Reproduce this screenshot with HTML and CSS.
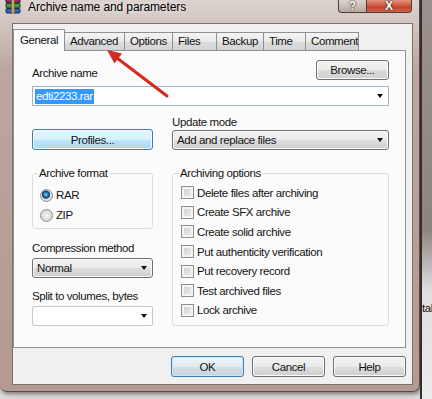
FILE: index.html
```html
<!DOCTYPE html>
<html lang="en">
<head>
  <meta charset="UTF-8">
  <title>Archive name and parameters</title>
  <link rel="stylesheet" href="styles.css">
</head>
<body>
  <div class="desktop">
    <div class="window">
      <div class="titlebar">
        <svg class="app-icon" viewBox="0 0 16 16">
          <rect x="1" y="0.5" width="14" height="4.5" rx="1" fill="#8e2c6a" stroke="#3b1530"/>
          <rect x="1" y="5.5" width="14" height="4.5" rx="1" fill="#3d9a3f" stroke="#173d19"/>
          <rect x="1" y="10.5" width="14" height="4.5" rx="1" fill="#2f63b8" stroke="#142a55"/>
          <rect x="6.5" y="0" width="3" height="16" fill="#c9a263" stroke="#6b5128" stroke-width="0.5"/>
        </svg>
        <span class="title">Archive name and parameters</span>
        <div class="caption">
          <span class="cap-btn cap-help">?</span>
          <span class="cap-btn cap-close">X</span>
        </div>
      </div>

      <div class="client">
        <div class="tabs">
          <span class="tab tab-general active">General</span>
          <span class="tab tab-advanced">Advanced</span>
          <span class="tab tab-options">Options</span>
          <span class="tab tab-files">Files</span>
          <span class="tab tab-backup">Backup</span>
          <span class="tab tab-time">Time</span>
          <span class="tab tab-comment">Comment</span>
        </div>

        <div class="panel">
          <div class="name-row">
            <label>Archive name</label>
            <button class="btn btn-browse">Browse...</button>
          </div>
          <div class="combo combo-edit">
            <span class="selected">edti2233.rar</span>
            <i class="arrow"></i>
          </div>

          <div class="columns">
            <button class="btn btn-hover btn-profiles">Profiles...</button>
            <div class="update">
              <label>Update mode</label>
              <div class="combo combo-list">
                <span>Add and replace files</span>
                <i class="arrow"></i>
              </div>
            </div>

            <div class="left-stack">
              <fieldset class="group group-format">
                <legend>Archive format</legend>
                <div class="option"><span class="radio checked"></span>RAR</div>
                <div class="option"><span class="radio"></span>ZIP</div>
              </fieldset>
              <label class="field-label">Compression method</label>
              <div class="combo combo-list combo-small">
                <span>Normal</span>
                <i class="arrow"></i>
              </div>
              <label class="field-label">Split to volumes, bytes</label>
              <div class="combo combo-empty combo-small">
                <i class="arrow"></i>
              </div>
            </div>

            <fieldset class="group group-options">
              <legend>Archiving options</legend>
              <div class="check-row"><span class="check"></span>Delete files after archiving</div>
              <div class="check-row"><span class="check"></span>Create SFX archive</div>
              <div class="check-row"><span class="check"></span>Create solid archive</div>
              <div class="check-row"><span class="check"></span>Put authenticity verification</div>
              <div class="check-row"><span class="check"></span>Put recovery record</div>
              <div class="check-row"><span class="check"></span>Test archived files</div>
              <div class="check-row"><span class="check"></span>Lock archive</div>
            </fieldset>
          </div>
        </div>

        <div class="dialog-buttons">
          <button class="btn btn-default">OK</button>
          <button class="btn">Cancel</button>
          <button class="btn">Help</button>
        </div>
      </div>
    </div>
    <div class="behind"><span>tal</span></div>
  </div>

  <svg class="pointer" width="432" height="399" viewBox="0 0 432 399">
    <line x1="167" y1="96" x2="117" y2="58" stroke="#d42a1f" stroke-width="3" stroke-linecap="round"/>
    <polygon points="107,50 122,53.5 114.5,63.5" fill="#d42a1f"/>
  </svg>
</body>
</html>
```

FILE: styles.css
```css
body {
  margin: 0;
  width: 432px;
  height: 399px;
  overflow: hidden;
  position: relative;
  background: #dcd9d8;
  font-family: "Liberation Sans", Arial, sans-serif;
  font-size: 11.5px;
  letter-spacing: -0.4px;
  color: #141414;
}
.desktop {
  display: flex;
  align-items: flex-start;
  height: 399px;
}
.window {
  box-sizing: border-box;
  width: 420px;
  height: 392px;
  flex-shrink: 0;
  display: flex;
  flex-direction: column;
  background: linear-gradient(to bottom, #dbd2ce 0, #d2c6c1 22px, #bca69f 70px, #b39a93 100%);
  border-right: 1px solid #5b4944;
  border-bottom: 1px solid #5b4944;
  border-radius: 0 0 7px 7px;
  box-shadow: 1px 2px 4px rgba(0, 0, 0, 0.45);
}

/* title bar */
.titlebar {
  height: 23px;
  flex-shrink: 0;
  display: flex;
  align-items: flex-start;
}
.app-icon {
  width: 16px;
  height: 16px;
  margin: -2px 0 0 5px;
}
.title {
  margin-left: 7px;
  font-size: 12px;
  letter-spacing: -0.1px;
  line-height: 14px;
  color: #000;
  text-shadow: 0 0 6px #fff;
}
.caption {
  margin-left: auto;
  margin-right: 7px;
  display: flex;
}
.cap-btn {
  box-sizing: border-box;
  height: 13px;
  display: flex;
  align-items: flex-end;
  justify-content: center;
  border: 1px solid #4e3d39;
  border-top: none;
  color: #fff;
  font-weight: bold;
  font-size: 12px;
  line-height: 12px;
  letter-spacing: 0;
  text-shadow: 0 0 2px #2a1a16, 0 0 1px #2a1a16;
}
.cap-help {
  width: 29px;
  border-radius: 0 0 0 4px;
  background: linear-gradient(#ddd4d0, #b9a8a2);
}
.cap-close {
  width: 45px;
  border-left: none;
  border-radius: 0 0 4px 0;
  background: linear-gradient(#e29480, #c8452d 60%, #d3624b);
}

/* client area */
.client {
  box-sizing: border-box;
  width: 401px;
  height: 362px;
  margin-left: 12px;
  border: 1px solid #7d6f6b;
  background: #f0f0f0;
  display: flex;
  flex-direction: column;
}
.tabs {
  display: flex;
  align-items: flex-end;
  height: 22px;
  margin-top: 5px;
  margin-bottom: -1px;
  position: relative;
  z-index: 1;
}
.tab {
  box-sizing: border-box;
  height: 18px;
  margin-left: -1px;
  margin-bottom: 1px;
  padding-left: 5px;
  border: 1px solid #8e9196;
  border-bottom: none;
  line-height: 17px;
  white-space: nowrap;
  overflow: hidden;
  background: linear-gradient(#f4f4f4, #e9e9e9 50%, #dcdcdc 51%, #d4d4d4);
}
.tab:first-child { margin-left: 0; }
.tab.active {
  height: 22px;
  margin-bottom: 0;
  padding-left: 6px;
  line-height: 20px;
  background: #fbfbfb;
  position: relative;
}
.tab-general { width: 52px; }
.tab-advanced { width: 61px; }
.tab-options { width: 49px; }
.tab-files { width: 45px; }
.tab-backup { width: 48px; }
.tab-time { width: 43px; }
.tab-comment { width: 54px; }

.panel {
  box-sizing: border-box;
  width: 393px;
  height: 298px;
  border: 1px solid #8e9196;
  background: #fbfbfb;
  padding: 9px 16px 0 18px;
}
label {
  display: block;
  line-height: 14px;
}
.name-row {
  display: flex;
  justify-content: space-between;
  align-items: flex-end;
  height: 20px;
}

/* buttons */
.btn {
  box-sizing: border-box;
  width: 73px;
  height: 21px;
  padding: 0;
  font: inherit;
  letter-spacing: inherit;
  color: #141414;
  border: 1px solid #707070;
  border-radius: 3px;
  background: linear-gradient(#f2f2f2, #ebebeb 50%, #dddddd 51%, #cfcfcf);
  box-shadow: inset 0 0 0 1px #fbfbfb;
}
.btn-browse { height: 20px; }
.btn-hover {
  border-color: #3c7fb1;
  background: linear-gradient(#e7f5fd, #d9f0fc 50%, #bee6fd 51%, #a9dbf6);
}
.btn-default {
  border-color: #3c7fb1;
  background: linear-gradient(#eef4f8, #e3ebf0 50%, #d4dee4 51%, #c9d4db);
  box-shadow: inset 0 0 0 1px #c6ecfb;
}
.btn-profiles {
  width: 121px;
  align-self: end;
}

/* combo boxes */
.combo {
  box-sizing: border-box;
  display: flex;
  align-items: center;
  height: 20px;
  padding: 0 5px 0 2px;
  white-space: nowrap;
}
.combo-edit {
  margin-top: 6px;
  border: 1px solid #9db5cf;
  background: #fff;
}
.combo-list {
  padding-left: 4px;
  border: 1px solid #707070;
  border-radius: 3px;
  background: linear-gradient(#f2f2f2, #ebebeb 50%, #dddddd 51%, #cfcfcf);
  box-shadow: inset 0 0 0 1px #fbfbfb;
}
.combo-empty {
  border: 1px solid #c9c9c9;
  border-radius: 2px;
  background: #fff;
}
.combo-small { margin-top: 3px; }
.selected {
  background: #3399ff;
  color: #fff;
  line-height: 15px;
  padding: 0 1px;
}
.arrow {
  margin-left: auto;
  width: 0;
  height: 0;
  border-left: 3.5px solid transparent;
  border-right: 3.5px solid transparent;
  border-top: 4px solid #111;
}

/* layout of the lower part */
.columns {
  display: grid;
  grid-template-columns: 121px 217px;
  column-gap: 19px;
  row-gap: 16px;
  margin-top: 9px;
}
.update .combo { margin-top: 1px; }
.field-label { margin-top: 12px; }
.field-label + .combo + .field-label { margin-top: 11px; }

.group {
  margin: 0;
  border: 1px solid #d5dfe5;
  border-radius: 3px;
  min-width: 0;
}
.group legend {
  padding: 0 1px;
  margin-left: -2px;
  line-height: 14px;
}
.group-format { padding: 5px 0 3px 7px; }
.group-options { padding: 3px 0 3px 8px; }

.option,
.check-row {
  display: flex;
  align-items: center;
  gap: 3px;
  white-space: nowrap;
}
.option { height: 20px; }
.check-row { height: 19.6px; }

.radio {
  box-sizing: border-box;
  width: 13px;
  height: 13px;
  border-radius: 50%;
  border: 1px solid #8e8f8f;
  background: radial-gradient(circle at 50% 50%, #f6f6f6 0, #dcdcdc 55%, #cdcdcd 100%);
}
.radio.checked {
  background: radial-gradient(circle at 45% 42%, #9ad8f7 0, #2c7fc2 22%, #0c3c6c 42%, #e2e2e2 52%, #cdcdcd 100%);
}
.check {
  box-sizing: border-box;
  width: 13px;
  height: 13px;
  border: 1px solid #8e8f8f;
  background: linear-gradient(135deg, #c9cdd3, #eef0f2);
  box-shadow: inset 0 0 0 2px #f4f4f4;
}

.dialog-buttons {
  display: flex;
  justify-content: flex-end;
  gap: 8px;
  margin: 8px 6px 0 0;
}

/* window lying behind the dialog */
.behind {
  box-sizing: border-box;
  width: 12px;
  height: 399px;
  flex-shrink: 0;
  border-left: 2px solid #352d2b;
  background: linear-gradient(#9a918e 0, #8f8380 230px, #dedede 290px, #ececec 100%);
  padding-top: 301px;
  line-height: 14px;
  overflow: hidden;
  white-space: nowrap;
}

.pointer {
  position: absolute;
  left: 0;
  top: 0;
  pointer-events: none;
}
```
